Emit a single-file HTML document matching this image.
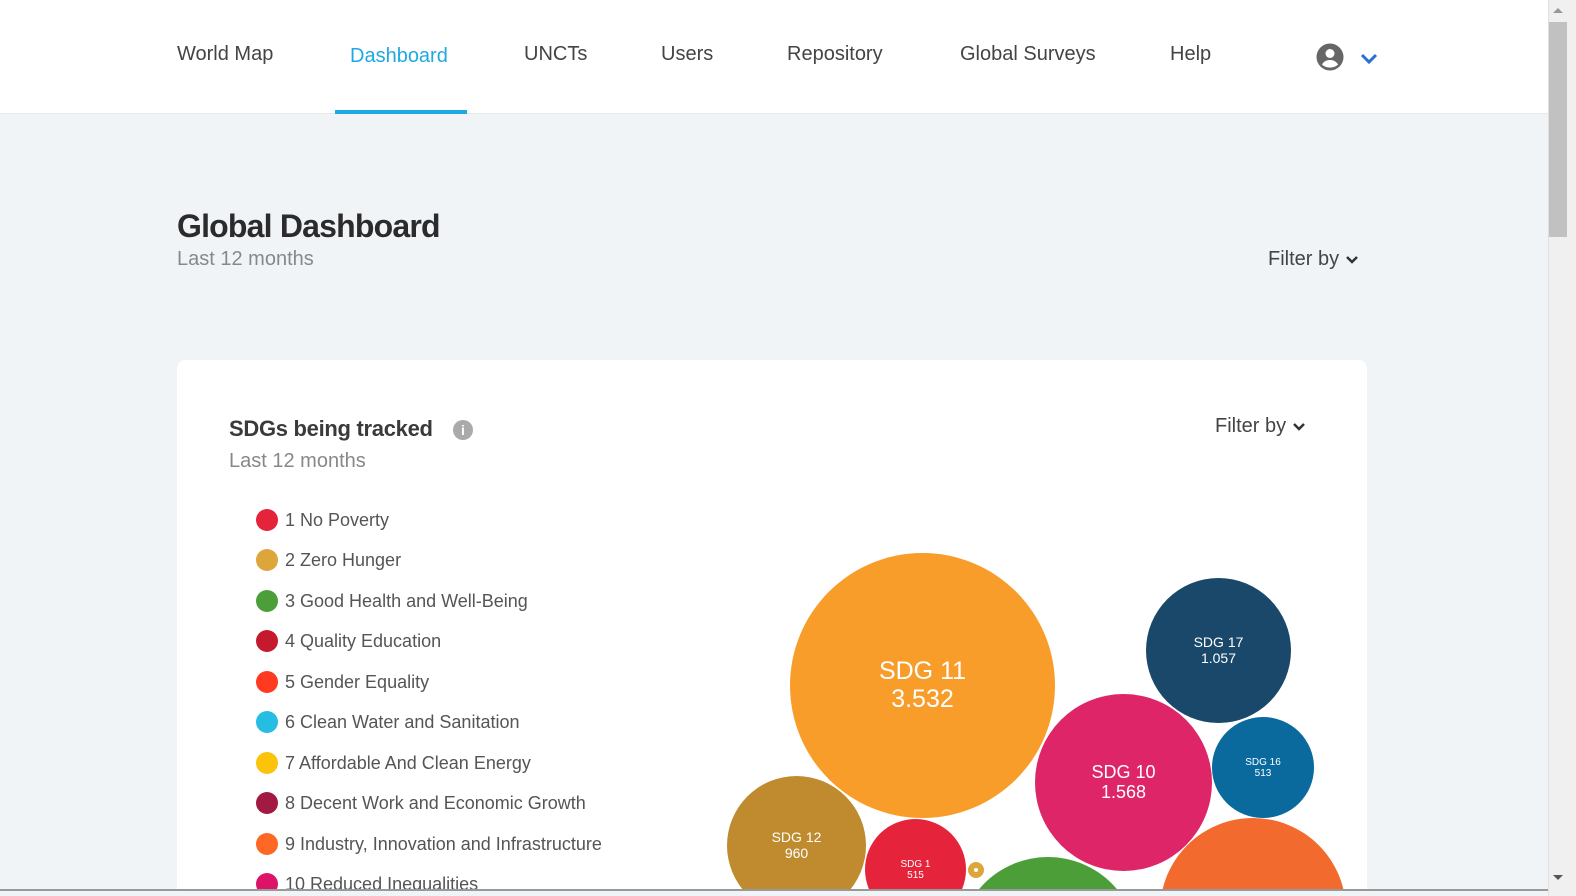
<!DOCTYPE html>
<html style="width:1576px;height:896px;overflow:hidden"><head><style>
*{margin:0;padding:0;box-sizing:border-box}
body{width:1576px;height:896px;overflow:hidden;background:#f1f4f7;font-family:"Liberation Sans",Arial,sans-serif;position:relative}
#w{position:absolute;left:0;top:0;width:1576px;height:889px;overflow:hidden}
.nav{position:absolute;left:0;top:0;width:1550px;height:114px;background:#fff;border-bottom:1px solid #e6e9ec}
.nav a{position:absolute;top:43px;font-size:20px;color:#444;text-decoration:none}
.active{color:#1fa9e1!important}
.ul{position:absolute;left:335px;top:110px;width:132px;height:4px;background:#1fa9e1}
.sb{position:absolute;left:1548px;top:0;width:28px;height:896px;background:#f0f0f0;border-left:1px solid #e0e0e0}
.thumb{position:absolute;left:1549px;top:22px;width:18px;height:215px;background:#c1c1c1}
h1{position:absolute;left:177px;top:208px;font-size:32px;color:#2b2b2b;font-weight:bold;letter-spacing:-0.8px}
.sub{position:absolute;font-size:20px;color:#888}
.filter{position:absolute;font-size:20px;color:#444}
.card{position:absolute;left:177px;top:360px;width:1190px;height:529px;background:#fff;border-radius:8px 8px 0 0}
.leg{position:absolute;left:256px;font-size:18px;color:#555;display:flex;align-items:center}
.leg i{display:inline-block;width:22px;height:22px;border-radius:50%;margin-right:7px}
.b{position:absolute;border-radius:50%;color:#fff;display:flex;flex-direction:column;align-items:center;justify-content:center;text-align:center;line-height:1.1}
.bottom{position:absolute;left:0;top:889px;width:1576px;height:7px;background:#f1f4f7;border-top:2px solid #999}
</style></head><body>
<div id="w">
<div class="nav">
<a style="left:177px">World Map</a>
<a class="active" style="left:350px;top:45px">Dashboard</a>
<a style="left:524px">UNCTs</a>
<a style="left:661px">Users</a>
<a style="left:787px">Repository</a>
<a style="left:960px">Global Surveys</a>
<a style="left:1170px">Help</a>
<svg style="position:absolute;left:1316px;top:43px" width="28" height="28" viewBox="0 0 28 28"><circle cx="14" cy="14" r="13.5" fill="#666"/><circle cx="14" cy="10.5" r="4.5" fill="#fff"/><path d="M6 21.5c2-3.5 5-4.5 8-4.5s6 1 8 4.5c-2 2-5 3-8 3s-6-1-8-3z" fill="#fff"/></svg>
<svg style="position:absolute;left:1360px;top:53px" width="18" height="12" viewBox="0 0 18 12"><path d="M2 2l7 7 7-7" stroke="#2a6fd6" stroke-width="3" fill="none"/></svg>
<div class="ul"></div>
</div>
<h1>Global Dashboard</h1>
<div class="sub" style="left:177px;top:248px">Last 12 months</div>
<div class="filter" style="left:1268px;top:248px">Filter by <svg width="14" height="10" viewBox="0 0 14 10"><path d="M2 2l5 5 5-5" stroke="#333" stroke-width="2.5" fill="none"/></svg></div>
<div class="card"></div>
<div style="position:absolute;left:229px;top:416px;font-size:22px;font-weight:bold;color:#3a3a3a;letter-spacing:-0.3px">SDGs being tracked</div>
<div style="position:absolute;left:453px;top:420px;width:20px;height:20px;border-radius:50%;background:#aaa;color:#fff;font-size:14px;font-weight:bold;text-align:center;line-height:20px">i</div>
<div class="sub" style="left:229px;top:450px;color:#888">Last 12 months</div>
<div class="filter" style="left:1215px;top:415px">Filter by <svg width="14" height="10" viewBox="0 0 14 10"><path d="M2 2l5 5 5-5" stroke="#333" stroke-width="2.5" fill="none"/></svg></div>
<div class="leg" style="top:509px"><i style="background:#e5243b"></i>1 No Poverty</div>
<div class="leg" style="top:549px"><i style="background:#dda63a"></i>2 Zero Hunger</div>
<div class="leg" style="top:590px"><i style="background:#4c9f38"></i>3 Good Health and Well-Being</div>
<div class="leg" style="top:630px"><i style="background:#c5192d"></i>4 Quality Education</div>
<div class="leg" style="top:671px"><i style="background:#ff3a21"></i>5 Gender Equality</div>
<div class="leg" style="top:711px"><i style="background:#26bde2"></i>6 Clean Water and Sanitation</div>
<div class="leg" style="top:752px"><i style="background:#fcc30b"></i>7 Affordable And Clean Energy</div>
<div class="leg" style="top:792px"><i style="background:#a21942"></i>8 Decent Work and Economic Growth</div>
<div class="leg" style="top:833px"><i style="background:#fd6925"></i>9 Industry, Innovation and Infrastructure</div>
<div class="leg" style="top:873px"><i style="background:#dd1367"></i>10 Reduced Inequalities</div>
<div class="b" style="left:790px;top:553px;width:265px;height:265px;background:#f99d2a;font-size:25px">SDG 11<br>3.532</div>
<div class="b" style="left:1146px;top:578px;width:145px;height:145px;background:#19486a;font-size:14px">SDG 17<br>1.057</div>
<div class="b" style="left:1035px;top:694px;width:177px;height:177px;background:#dd2567;font-size:18px">SDG 10<br>1.568</div>
<div class="b" style="left:1212px;top:717px;width:102px;height:101px;background:#0a6a9e;font-size:10px">SDG 16<br>513</div>
<div class="b" style="left:727px;top:776px;width:139px;height:139px;background:#bf8b2e;font-size:14px">SDG 12<br>960</div>
<div class="b" style="left:865px;top:819px;width:101px;height:101px;background:#e5243b;font-size:10px">SDG 1<br>515</div>
<div class="b" style="left:968px;top:862px;width:16px;height:16px;background:#dda63a;border:5px solid #dda63a"><span style="width:4px;height:4px;background:#fff;border-radius:50%"></span></div>
<div class="b" style="left:958px;top:857px;width:180px;height:180px;background:#4c9f38"></div>
<div class="b" style="left:1160px;top:818px;width:186px;height:186px;background:#f26a2d"></div>
</div>
<div class="bottom"></div>
<div class="sb"></div>
<div class="thumb"></div>
<svg style="position:absolute;left:1552px;top:6px" width="12" height="8"><path d="M1 7l5-5 5 5z" fill="#999"/></svg>
<svg style="position:absolute;left:1552px;top:874px" width="12" height="8"><path d="M1 1l5 5 5-5z" fill="#555"/></svg>
</body></html>
